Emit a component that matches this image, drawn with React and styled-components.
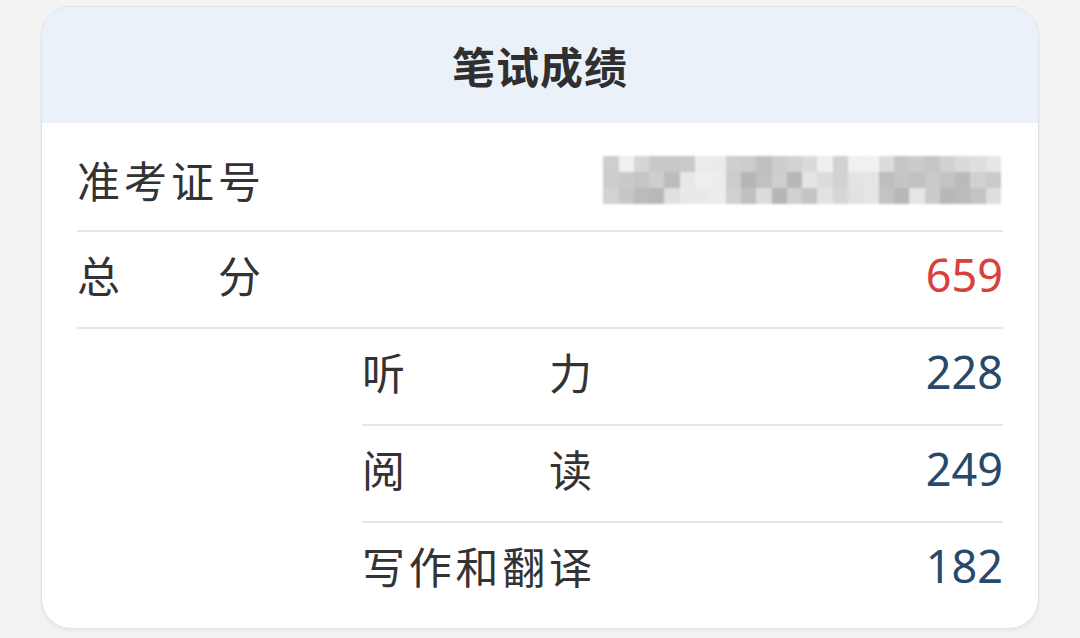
import styled, { createGlobalStyle } from "styled-components";

const GlobalStyle = createGlobalStyle`
	html, body {
		margin: 0;
		padding: 0;
		background: #f3f3f4;
	}
	body {
		font-family: "Noto Sans CJK SC", "Noto Sans", sans-serif;
	}
`;

const mainRows = [
	{ label: "准考证号", hidden: true },
	{ label: "总分", value: "659", red: true },
];

const subRows = [
	{ label: "听力", value: "228" },
	{ label: "阅读", value: "249" },
	{ label: "写作和翻译", value: "182" },
];

// mosaic shades for the blurred ticket number
const mosaic = Array.from({ length: 3 }, (_, r) =>
	Array.from({ length: 26 }, (_, c) => {
		const gap = c === 6 || c === 7 || c === 16 || c === 17;
		const n = Math.abs(Math.sin((r + 1) * 12.9898 + (c + 1) * 78.233) * 43758.5453) % 1;
		let v = gap ? 224 + n * 16 : 182 + n * 52;
		if (r === 0) v += 10;
		return Math.round(Math.min(v, 246));
	})
);

const App = () => {
	return (
		<>
			<GlobalStyle />
			<Page>
				<Card>
					<Header>笔试成绩</Header>
					<Body>
						{mainRows.map((row, i) => (
							<Row key={row.label} first={i === 0}>
								<Label width={4}>{row.label}</Label>
								{row.hidden ? (
									<Mosaic>
										{mosaic.flat().map((v, k) => (
											<Cell key={k} style={{ background: `rgb(${v},${v},${v})` }} />
										))}
									</Mosaic>
								) : (
									<Value red={row.red}>{row.value}</Value>
								)}
							</Row>
						))}
						{subRows.map((row, i) => (
							<Row key={row.label} sub last={i === subRows.length - 1}>
								<Label width={5}>{row.label}</Label>
								<Value>{row.value}</Value>
							</Row>
						))}
					</Body>
				</Card>
			</Page>
		</>
	);
};

export default App;

const Page = styled.div`
	width: 1080px;
	height: 638px;
	box-sizing: border-box;
	padding: 6px 41px 0 41px;
`;

const Card = styled.div`
	height: 623px;
	box-sizing: border-box;
	background: #ffffff;
	border: 1.5px solid #dbe3ec;
	border-radius: 30px;
	overflow: hidden;
	box-shadow: 0 2px 4px rgba(0, 0, 0, 0.05);
`;

const Header = styled.div`
	height: 116px;
	background: #ebf1f8;
	display: flex;
	align-items: center;
	justify-content: center;
	font-size: 43px;
	font-weight: 700;
	color: #2f2f2f;
	letter-spacing: 1px;
`;

const Body = styled.div`
	display: flex;
	flex-direction: column;
	padding: 0 35px;
`;

const Row = styled.div`
	display: flex;
	align-items: center;
	justify-content: space-between;
	box-sizing: border-box;
	height: ${(p) => (p.first ? "109px" : "97px")};
	padding-top: ${(p) => (p.first ? "12px" : "0")};
	padding-bottom: ${(p) => (p.first ? "6px" : "10px")};
	margin-left: ${(p) => (p.sub ? "285px" : "0")};
	border-bottom: ${(p) => (p.last ? "2px solid transparent" : "2px solid #e6e6e8")};
`;

const Label = styled.span`
	display: inline-block;
	width: ${(p) => p.width * 46}px;
	text-align: justify;
	text-align-last: justify;
	font-size: 43px;
	color: #333333;
	line-height: 1;
`;

const Value = styled.span`
	font-family: "Noto Sans", "Liberation Sans", sans-serif;
	font-size: 45px;
	line-height: 1;
	color: ${(p) => (p.red ? "#d8403c" : "#274a6c")};
`;

const Mosaic = styled.div`
	display: grid;
	grid-template-columns: repeat(26, 15.3px);
	grid-auto-rows: 16px;
	margin-right: 2px;
	filter: blur(1px);
`;

const Cell = styled.div``;
